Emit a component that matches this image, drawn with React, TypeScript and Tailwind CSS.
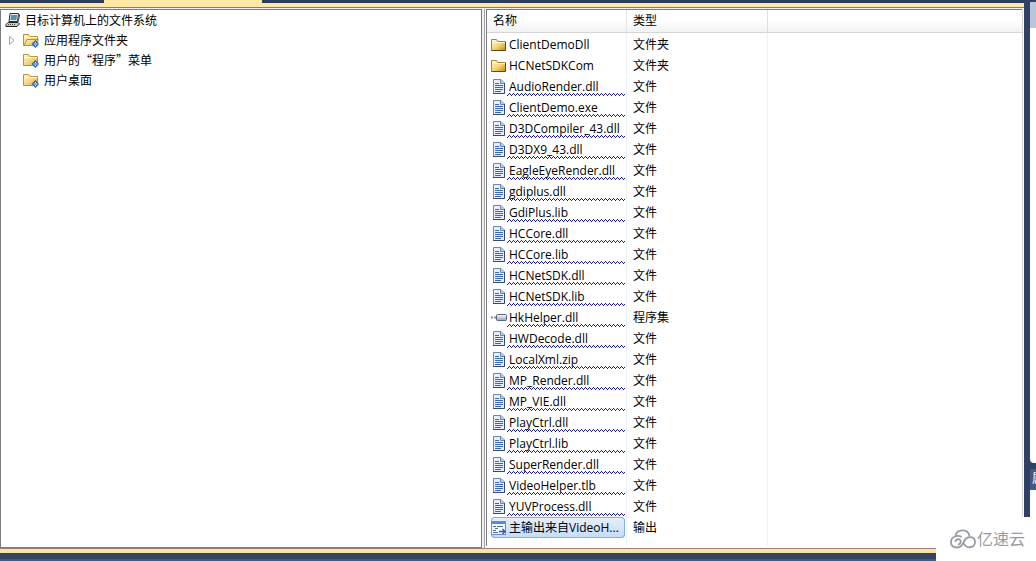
import type { ReactNode } from 'react';

type EntryKind = 'folder' | 'file' | 'assembly' | 'output';

interface Entry {
  name: string;
  type: string;
  kind: EntryKind;
}

const TREE = ['应用程序文件夹', '用户的“程序”菜单', '用户桌面'];

const file = (name: string): Entry => ({ name, type: '文件', kind: 'file' });

const ENTRIES: Entry[] = [
  { name: 'ClientDemoDll', type: '文件夹', kind: 'folder' },
  { name: 'HCNetSDKCom', type: '文件夹', kind: 'folder' },
  file('AudioRender.dll'),
  file('ClientDemo.exe'),
  file('D3DCompiler_43.dll'),
  file('D3DX9_43.dll'),
  file('EagleEyeRender.dll'),
  file('gdiplus.dll'),
  file('GdiPlus.lib'),
  file('HCCore.dll'),
  file('HCCore.lib'),
  file('HCNetSDK.dll'),
  file('HCNetSDK.lib'),
  { name: 'HkHelper.dll', type: '程序集', kind: 'assembly' },
  file('HWDecode.dll'),
  file('LocalXml.zip'),
  file('MP_Render.dll'),
  file('MP_VIE.dll'),
  file('PlayCtrl.dll'),
  file('PlayCtrl.lib'),
  file('SuperRender.dll'),
  file('VideoHelper.tlb'),
  file('YUVProcess.dll'),
  { name: '主输出来自VideoH...', type: '输出', kind: 'output' },
];

const Icon = ({ children }: { children: ReactNode }) => (
  <svg viewBox="0 0 16 16" className="size-4 shrink-0" aria-hidden="true">
    {children}
  </svg>
);

const Gradients = () => (
  <svg className="absolute size-0" aria-hidden="true">
    <defs>
      <linearGradient id="gold" x1="0" y1="0" x2="1" y2="1">
        <stop offset="0" stopColor="#fff3b8" />
        <stop offset="0.5" stopColor="#f8d877" />
        <stop offset="1" stopColor="#c98508" />
      </linearGradient>
      <linearGradient id="paleGold" x1="0" y1="0" x2="1" y2="1">
        <stop offset="0" stopColor="#fff8d4" />
        <stop offset="1" stopColor="#e8b235" />
      </linearGradient>
      <linearGradient id="steel" x1="0" y1="0" x2="0" y2="1">
        <stop offset="0" stopColor="#ffffff" />
        <stop offset="1" stopColor="#93a3bb" />
      </linearGradient>
      <pattern id="wave" width="4" height="3" patternUnits="userSpaceOnUse">
        <path
          d="M0 2 h1 v1 h-1 Z M1 1 h1 v1 h-1 Z M2 0 h1 v1 h-1 Z M3 1 h1 v1 h-1 Z"
          fill="#1414a8"
          shapeRendering="crispEdges"
        />
      </pattern>
    </defs>
  </svg>
);

const ComputerIcon = () => (
  <Icon>
    <path d="M5 1.5 L13.5 1.5 L12.5 9.5 L4 9.5 Z" fill="#e9e9e6" stroke="#333" />
    <path d="M6 3 L12 3 L11.3 8 L5.4 8 Z" fill="#5b8fae" />
    <path d="M14 2 L15 3 L13.5 10 L12.8 10 Z" fill="#333" />
    <path d="M3 10.5 L13 10.5 L14.5 12 L12 14.5 L1 14.5 L1 12.5 Z" fill="#c9c9c5" stroke="#222" />
    <path d="M3 12.5 H11" stroke="#444" strokeDasharray="1 1" />
  </Icon>
);

const TreeFolderIcon = ({ open }: { open?: boolean }) => (
  <Icon>
    <path d="M0.5 13.5 V2.5 H5.5 L7 4.5 H14.5 V13.5 Z" fill="url(#paleGold)" stroke="#b8933f" />
    <path d="M1 5.5 H14" stroke="#fffbe6" />
    {open && (
      <path d="M1 13.5 L4 7.5 H15.5 L12.5 13.5 Z" fill="url(#paleGold)" stroke="#b8933f" />
    )}
    {/* linked-target badge */}
    <path d="M12.5 8 L16 12 L12.5 16 L8.5 12 Z" fill="#2a62b5" />
    <path d="M12.5 10 V14 M10.5 12 H14.5" stroke="#e3eeff" strokeWidth="1" />
    <rect x="11.5" y="11" width="2" height="2" fill="#7fa9e6" />
  </Icon>
);

const FolderIcon = () => (
  <Icon>
    <path d="M0.5 13.5 V2.5 H5.5 L7 4.5 H14.5 V13.5 Z" fill="url(#gold)" stroke="#a98232" />
    <path d="M1 3.5 H5 M1 5.5 H14" stroke="#fff8d8" />
    <path d="M0.5 13.5 H14.5 V5" fill="none" stroke="#5f4a1c" />
  </Icon>
);

const FileIcon = () => (
  <Icon>
    <path d="M2.5 0.5 H10 L13.5 4 V14.5 H2.5 Z" fill="#e6effb" stroke="#6c87ae" />
    <path d="M9.5 0.5 V4.5 H13.5" fill="#b7cbe6" stroke="#6c87ae" />
    <path d="M4 4.5 H8 M4 6.5 H12 M4 8.5 H12 M4 10.5 H12 M4 12.5 H10" stroke="#3467b4" />
    <path d="M2 14.5 H13.5 V4" fill="none" stroke="#34496d" />
  </Icon>
);

const AssemblyIcon = () => (
  <Icon>
    <path d="M0 7.5 H2 M3 7.5 H6" stroke="#8291a8" strokeWidth="2" />
    <rect x="5.5" y="4.5" width="10" height="6" rx="1" fill="url(#steel)" stroke="#53657f" />
  </Icon>
);

const OutputIcon = () => (
  <Icon>
    <rect x="0.5" y="1.5" width="14" height="13" fill="#f4f8ff" stroke="#6d8fc6" />
    <path d="M1 3 H14" stroke="#5c88cf" strokeWidth="2" />
    <path d="M2 6.5 H5 M6 6.5 H12 M4 8.5 H7 M2 10.5 H5 M2 12.5 H7" stroke="#4a6fae" />
    <path d="M8 11.5 H13.5 M11.5 9 L14 11.5 L11.5 14" fill="none" stroke="#2458ad" strokeWidth="1.3" />
  </Icon>
);

const ICONS: Record<EntryKind, () => ReactNode> = {
  folder: FolderIcon,
  file: FileIcon,
  assembly: AssemblyIcon,
  output: OutputIcon,
};

const Squiggle = () => (
  <svg className="absolute bottom-px left-4 h-[3px] w-[118px]" aria-hidden="true">
    <rect width="100%" height="3" fill="url(#wave)" />
  </svg>
);

const EntryRow = ({ entry }: { entry: Entry }) => {
  const EntryIcon = ICONS[entry.kind];
  const selected = entry.kind === 'output';
  const flagged = entry.kind === 'file' || entry.kind === 'assembly';

  return (
    <tr className="h-[21px]">
      <td className="border-r border-[#eef1f6] p-0 pl-1">
        <div
          className={`relative flex h-[21px] w-[134px] items-center gap-0.5 whitespace-nowrap ${
            selected
              ? 'rounded-sm bg-linear-to-b from-[#e6f0fd] to-[#c3dcfa] ring-1 ring-inset ring-[#86aedb]'
              : ''
          }`}
        >
          <EntryIcon />
          <span>{entry.name}</span>
          {flagged && <Squiggle />}
        </div>
      </td>
      <td className="border-r border-[#eef1f6] p-0 pl-1.5">{entry.type}</td>
      <td className="p-0" />
    </tr>
  );
};

const FileTree = () => (
  <nav className="border border-[#7c7c80] bg-white pl-1 font-['Noto_Sans_CJK_SC',sans-serif]">
    <ul className="text-xs leading-5">
      <li>
        <div className="flex h-5 items-center gap-1">
          <ComputerIcon />
          <span>目标计算机上的文件系统</span>
        </div>
        <ul>
          {TREE.map((label, i) => (
            <li key={label} className="flex h-5 items-center gap-[5px]">
              <span className="flex w-[13px] pl-1">
                {i === 0 && (
                  <button type="button" aria-label={label}>
                    <svg viewBox="0 0 6 9" className="h-[9px] w-1.5" aria-hidden="true">
                      <path d="M0.5 0.5 L5 4.5 L0.5 8.5 Z" fill="#fff" stroke="#a0a0a0" />
                    </svg>
                  </button>
                )}
              </span>
              <TreeFolderIcon open={i === 0} />
              <span>{label}</span>
            </li>
          ))}
        </ul>
      </li>
    </ul>
  </nav>
);

const FileList = () => (
  <main className="border-l border-t border-[#7c7c80] bg-white">
    <table className="w-full table-fixed border-separate border-spacing-0 text-left">
      <colgroup>
        <col className="w-[140px]" />
        <col className="w-[141px]" />
        <col />
      </colgroup>
      <thead>
        <tr className="h-[23px] bg-linear-to-b from-white from-40% to-[#f0f1f3]">
          <th className="border-b border-r border-b-[#d5d5d5] border-r-[#e4e7ec] p-0 pl-1.5 font-normal">
            名称
          </th>
          <th className="border-b border-r border-b-[#d5d5d5] border-r-[#dcdfe4] p-0 pl-1.5 font-normal">
            类型
          </th>
          <th className="border-b border-[#d5d5d5] p-0" />
        </tr>
      </thead>
      <tbody>
        <tr className="h-px">
          <td className="border-r border-[#eef1f6] p-0" />
          <td className="border-r border-[#eef1f6] p-0" />
          <td className="p-0" />
        </tr>
        {ENTRIES.map((entry) => (
          <EntryRow key={entry.name} entry={entry} />
        ))}
        <tr className="h-2">
          <td className="border-r border-[#eef1f6] p-0" />
          <td className="border-r border-[#eef1f6] p-0" />
          <td className="p-0" />
        </tr>
      </tbody>
    </table>
  </main>
);

const SideDock = () => (
  <aside className="flex w-3 shrink-0 flex-col bg-[#2f4265] pl-1.5 text-xs">
    <div className="mt-0.5 h-[26px] bg-[#b9c6da]" />
    <div className="flex-1 rounded-bl-sm bg-white" />
    <div className="mt-1.5 h-[21px] overflow-hidden bg-[#43597f] pl-0.5 leading-5 text-white">
      <span className="whitespace-nowrap">属</span>
    </div>
    <div className="h-[71px] bg-white" />
  </aside>
);

const Watermark = () => (
  <div className="absolute bottom-0 right-0 flex h-11 w-[100px] items-center gap-px bg-white pl-3.5 text-[#979ba3]">
    <svg viewBox="0 0 26 20" className="h-5 w-[26px] shrink-0" fill="none" stroke="currentColor" strokeWidth="1.8" aria-hidden="true">
      <path d="M5.5 7 C7 -0.5 18 -0.5 19.5 7" />
      <path d="M11.5 8 C8 5.5 1 7.5 1 13 C1 17 4 18.5 7 18.5 C12 18.5 13 14.5 14.5 11.5 C17 6.5 25 7 25 13 C25 19.5 16 20 14 14.5" />
      <path d="M5.5 13 A2.6 2.6 0 1 1 8 15.4" />
    </svg>
    <span className="text-base leading-5">亿速云</span>
  </div>
);

export default function App() {
  return (
    <div className="relative flex min-h-screen flex-col bg-[#435a87] font-['Open_Sans','Noto_Sans_CJK_SC',sans-serif] text-xs leading-5 text-black">
      <Gradients />
      <div className="flex flex-1">
        <div className="flex min-w-0 flex-1 flex-col">
          <div className="flex h-[3px] bg-[#2d3d60] pl-[104px]">
            <div className="w-[158px] bg-[#ffe8a6]" />
          </div>
          <div className="h-1 bg-[#ffe8a6]" />
          <div className="grid flex-1 grid-cols-[482fr_540fr] gap-x-0.5 border-t border-[#8c7d70] bg-[#f0f0f0] pt-px">
            <FileTree />
            <div className="flex border-l border-[#a0a0a4] bg-white pl-px">
              <div className="min-w-0 flex-1">
                <FileList />
              </div>
              <div className="w-0.5 border-l border-[#d8d8dc]" />
            </div>
          </div>
          <div className="h-[5px] border-t border-[#9b7f7a] bg-[#f8e4a4]" />
          <div className="h-1.5 bg-[#354463]" />
          <div className="h-0.5 bg-[#435a87]" />
        </div>
        <SideDock />
      </div>
      <Watermark />
    </div>
  );
}
